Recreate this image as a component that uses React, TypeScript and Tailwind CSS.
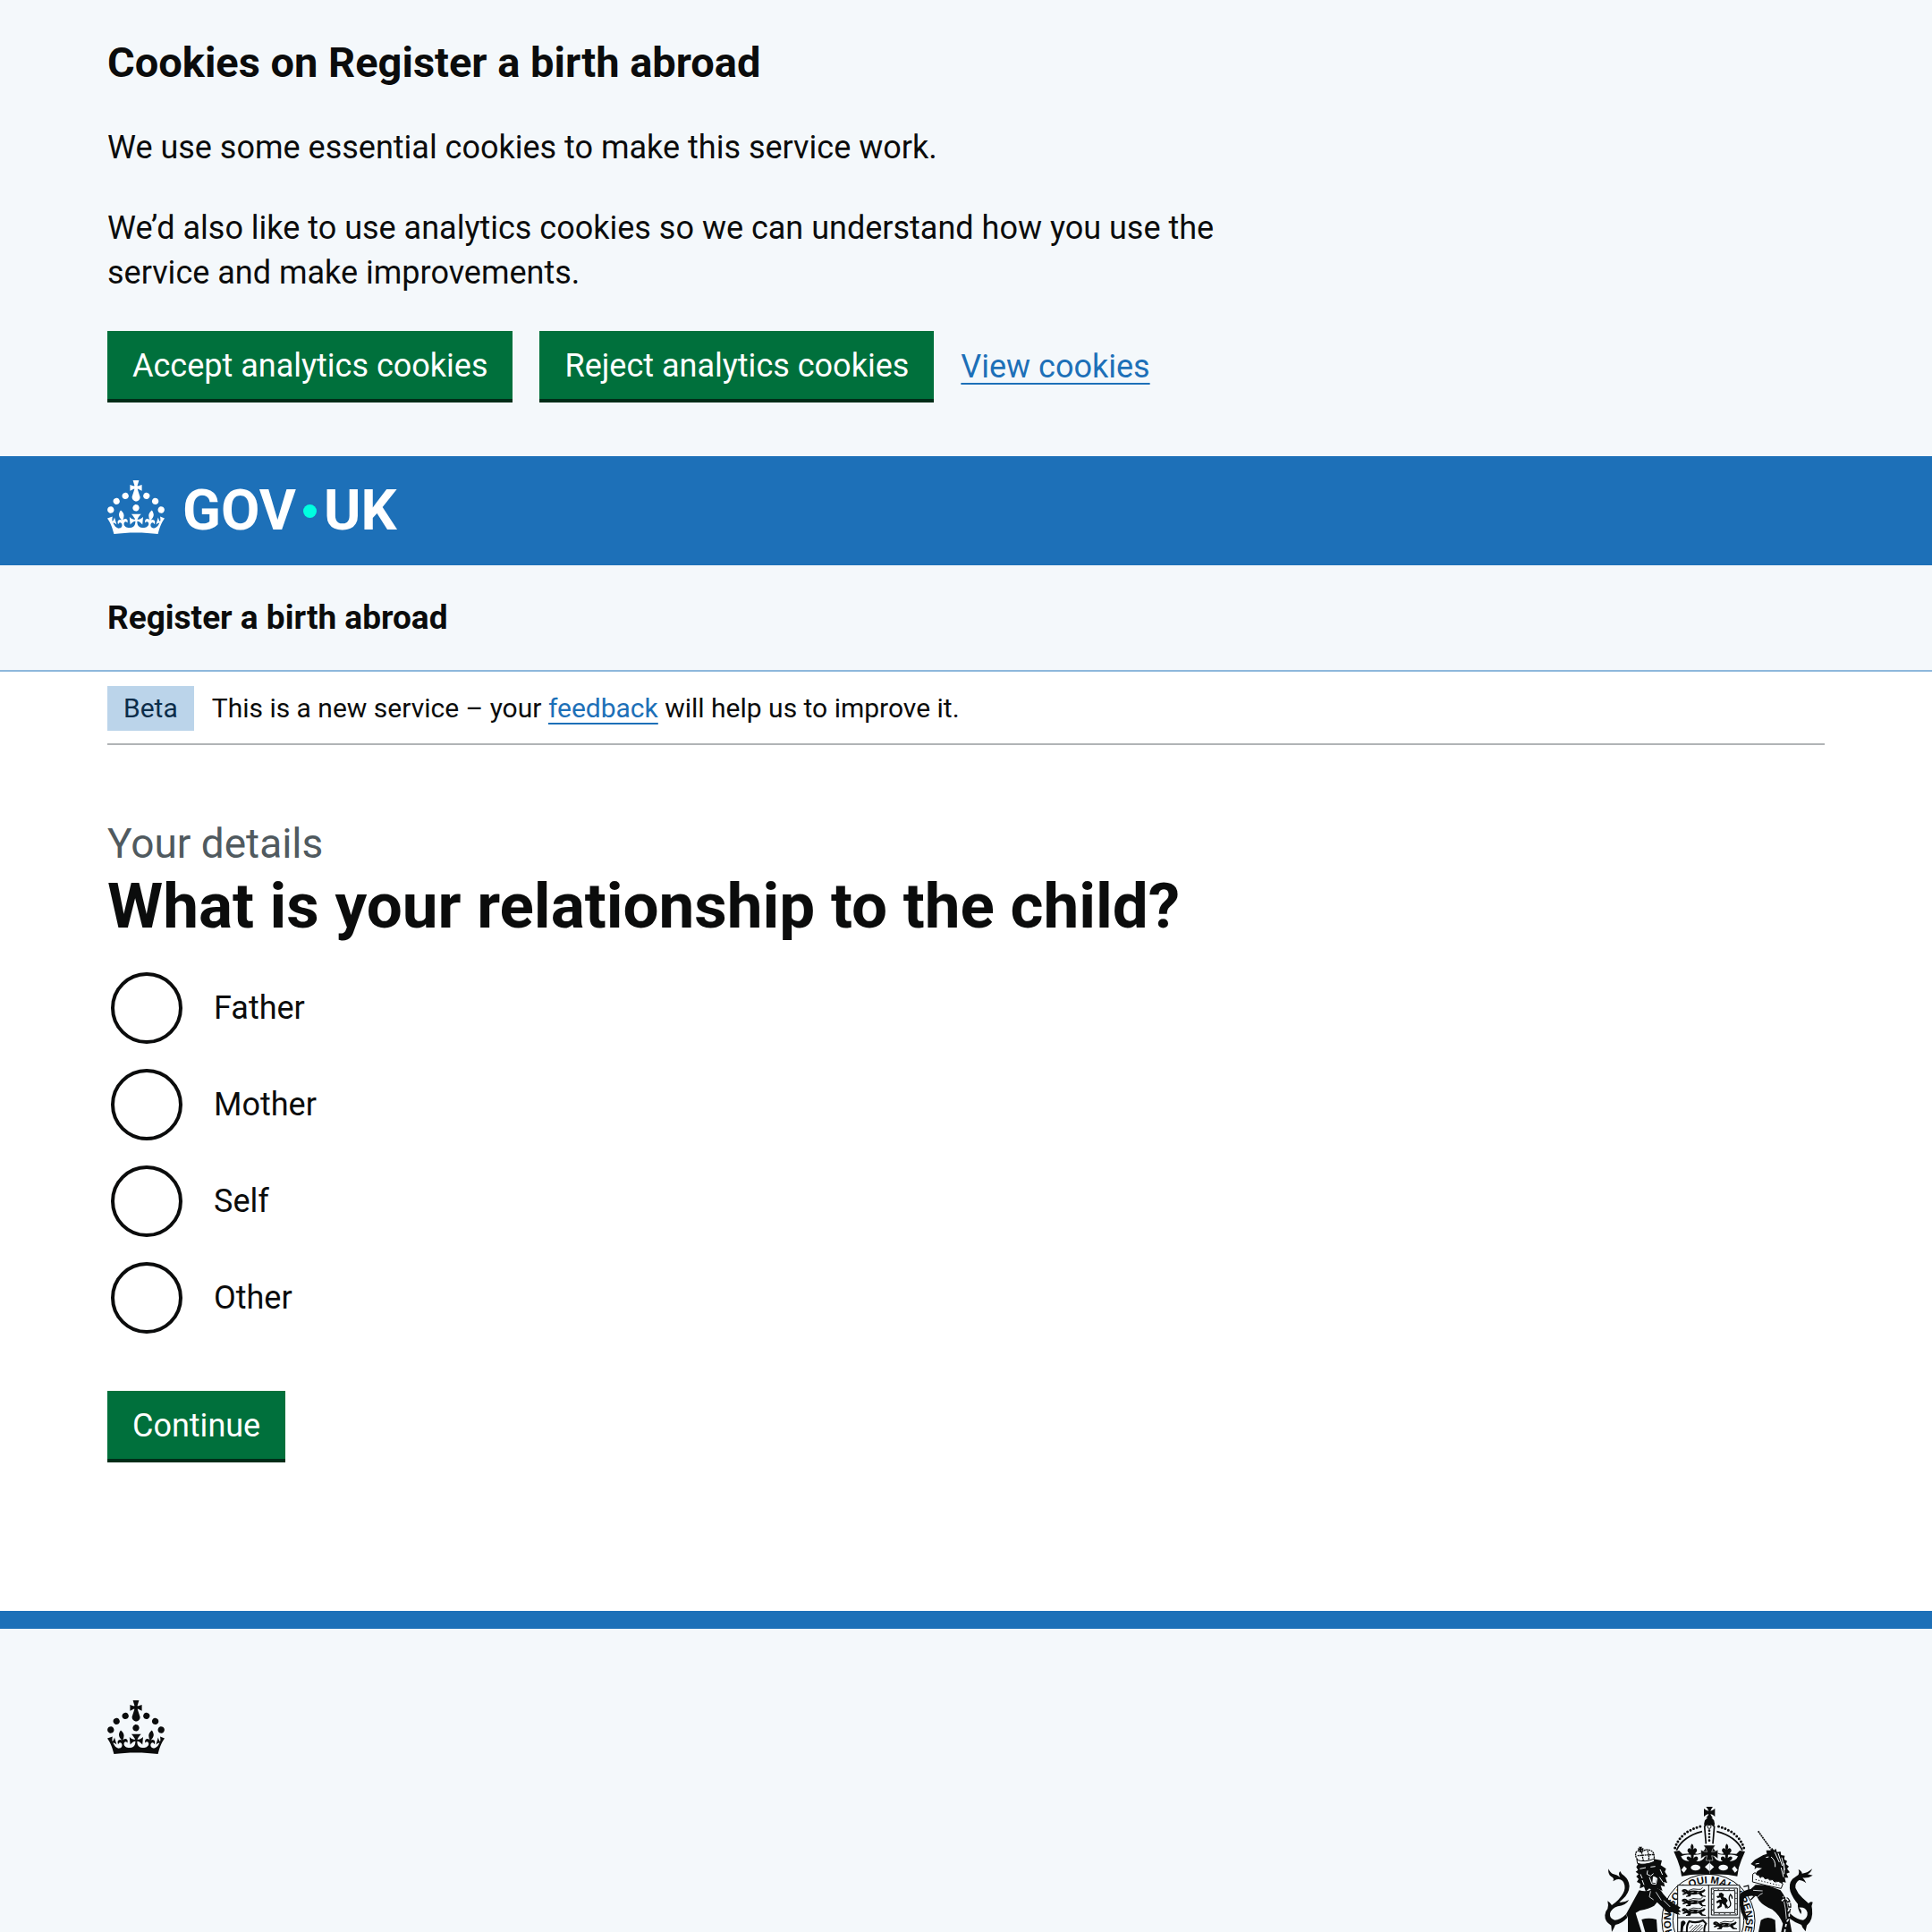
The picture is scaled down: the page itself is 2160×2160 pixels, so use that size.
import type { ReactNode } from "react";

const relationships = ["Father", "Mother", "Self", "Other"];

function Container({ className = "", children }: { className?: string; children: ReactNode }) {
  return <div className={"mx-auto w-full max-w-[1920px] " + className}>{children}</div>;
}

function GreenButton({ children }: { children: ReactNode }) {
  return (
    <button
      type="button"
      className="h-20 cursor-pointer border-b-4 border-[#002d18] bg-[#00703c] px-7 pt-[2px] text-[36px] leading-[38px] text-white"
    >
      {children}
    </button>
  );
}

function TextLink({ children }: { children: ReactNode }) {
  return (
    <a href="#" className="text-[#1d70b8] underline decoration-2 underline-offset-[6px]">
      {children}
    </a>
  );
}

function Crown() {
  return (
    <svg viewBox="0 0 32 30" className="h-[60px] w-16 shrink-0" fill="currentColor" aria-hidden="true">
      <path
        fillRule="evenodd"
        d="M22.6 10.4c-1 .4-2-.1-2.4-1-.4-.9.1-2 1-2.4.9-.4 2 .1 2.4 1s-.1 2-1 2.4m-5.9 6.7c-.9.4-2-.1-2.4-1-.4-.9.1-2 1-2.4.9-.4 2 .1 2.4 1s-.1 2-1 2.4m10.8-3.7c-1 .4-2-.1-2.4-1-.4-.9.1-2 1-2.4.9-.4 2 .1 2.4 1s0 2-1 2.4m3.3 4.8c-1 .4-2-.1-2.4-1-.4-.9.1-2 1-2.4.9-.4 2 .1 2.4 1s-.1 2-1 2.4M17 4.7l2.3 1.2V2.5l-2.3.7-.2-.2.9-3h-3.4l.9 3-.2.2c-.1.1-2.3-.7-2.3-.7v3.4L15 4.7c.1.1.1.2.2.2l-1.3 4c-.1.2-.1.4-.1.6 0 1.1.8 2 1.9 2.2h.7c1-.2 1.9-1.1 1.9-2.1 0-.2 0-.4-.1-.6l-1.3-4c-.1-.2 0-.2.1-.3m-7.6 5.7c.9.4 2-.1 2.4-1 .4-.9-.1-2-1-2.4-.9-.4-2 .1-2.4 1s0 2 1 2.4m-5 3c.9.4 2-.1 2.4-1 .4-.9-.1-2-1-2.4-.9-.4-2 .1-2.4 1s.1 2 1 2.4m-3.2 4.8c.9.4 2-.1 2.4-1 .4-.9-.1-2-1-2.4-.9-.4-2 .1-2.4 1s0 2 1 2.4m14.8 11c4.4 0 8.6.3 12.3.8 1.1-4.5 2.4-7 3.7-8.8l-2.5-.9c.2 1.3.3 1.9 0 2.7-.4-.4-.8-1.1-1.1-2.3l-1.2 4c.7-.5 1.3-.8 2-.9-1.1 2.5-2.6 3.1-3.5 3-1.1-.2-1.7-1.2-1.5-2.1.3-1.2 1.5-1.5 2.1-.1 1.1-2.3-.8-3-2-2.3 1.9-1.9 2.1-3.5.6-5.6-2.1 1.6-2.1 3.2-1.2 5.5-1.2-1.4-3.2-.6-2.5 1.6.9-1.4 2.1-.5 1.9.8-.2 1.1-1.7 2.1-3.5 1.9-2.7-.2-2.9-2.1-2.9-3.6.7-.1 1.9.5 2.9 1.9l.4-4.3c-1.1 1.1-2.1 1.4-3.2 1.4.4-1.2 2.1-3 2.1-3h-5.4s1.7 1.9 2.1 3c-1.1 0-2.1-.2-3.2-1.4l.4 4.3c1-1.4 2.2-2 2.9-1.9-.1 1.5-.2 3.4-2.9 3.6-1.9.2-3.4-.8-3.5-1.9-.2-1.3 1-2.2 1.9-.8.7-2.3-1.2-3-2.5-1.6.9-2.2.9-3.9-1.2-5.5-1.5 2-1.3 3.7.6 5.6-1.2-.7-3.1 0-2 2.3.6-1.4 1.8-1.1 2.1.1.2.9-.3 1.9-1.5 2.1-.9.2-2.4-.5-3.5-3 .6 0 1.2.3 2 .9l-1.2-4c-.3 1.1-.7 1.9-1.1 2.3-.3-.8-.2-1.4 0-2.7l-2.9.9C1.3 23 2.6 25.5 3.7 30c3.7-.5 7.9-.8 12.3-.8"
      />
    </svg>
  );
}

/* Left half of the crest's imperial crown; drawn twice, once mirrored. */
function CrownHalf() {
  return (
    <g>
      <path d="M278 198Q296 143 366 125" fill="none" stroke="currentColor" strokeWidth="9" strokeLinecap="round" strokeDasharray="0 11.6" />
      <path d="M283 206Q304 160 369 143" fill="none" stroke="currentColor" strokeWidth="5" />
      <path d="M377 124L382 184" fill="none" stroke="currentColor" strokeWidth="5" />
      <path d="M274 210L292 207L303 218L326 217Q316 208 322 201Q328 196 333 204Q327 193 335 184Q344 193 338 204Q344 196 350 201Q355 208 345 217Q356 220 368 213L378 203Q381 198 375 190L393 190L393 288Q345 284 300 293Q298 266 286 238Z" />
      <g fill="#f4f8fb">
        <path d="M298 226Q305 244 326 242Q314 236 318 228Q324 223 332 232L331 221Q314 218 298 226Z" />
        <path d="M341 221L340 233Q347 223 354 229Q358 238 349 243Q371 244 380 224L372 216Q358 222 341 221Z" />
        <ellipse cx="347" cy="264" rx="16" ry="10" />
        <path d="M309 259L318 268L308 281L299 272Z" />
        <path d="M393 248L378 262L393 276Z" />
      </g>
    </g>
  );
}

function PassantLion({ x, y }: { x: number; y: number }) {
  return (
    <g transform={`translate(${x} ${y})`}>
      <path d="M0 4Q6-2 14 1L22 7Q38 2 58 7Q72 6 74 0L79 3Q76 12 66 13L70 21L80 23V26L66 25L56 16Q44 20 32 18L28 25L14 26V23L22 20L16 16L4 20L2 16L10 12L1 10Z" />
      <path d="M22 5Q38-4 54 1Q64 4 70-5" fill="none" stroke="currentColor" strokeWidth="2.5" />
      <path d="M10 6l3 2M30 12l10-2M50 12l8-2" fill="none" stroke="#f4f8fb" strokeWidth="1.8" />
    </g>
  );
}

function Crest() {
  return (
    <svg viewBox="0 0 780 480" className="block h-40 w-[260px] shrink-0" fill="currentColor" role="img" aria-label="Royal coat of arms">
      {/* garter */}
      <circle cx="390" cy="442" r="156" fill="#f4f8fb" stroke="currentColor" strokeWidth="3" />
      <circle cx="390" cy="442" r="119" fill="none" stroke="currentColor" strokeWidth="3" />
      <defs>
        <path id="garter-motto" d="M310 540A126 126 0 1 1 470 540" />
      </defs>
      <text className="font-['Liberation_Sans'] text-[34px] font-bold" textAnchor="middle">
        <textPath href="#garter-motto" startOffset="49%">HONI SOIT QUI MAL Y PENSE</textPath>
      </text>

      {/* orb and cross */}
      <path d="M382 60H405Q398 68 397 74Q405 72 412 66V93Q405 86 397 84Q399 92 405 97H382Q389 92 391 84Q382 86 375 93V66Q382 72 391 74Q389 67 382 60Z" />
      <path d="M388 96H400L409 106Q413 116 409 128Q393 112 377 128Q374 116 378 106Z" />
      <circle cx="393" cy="127" r="6" fill="none" stroke="currentColor" strokeWidth="3" />
      <path d="M393 140V184" fill="none" stroke="currentColor" strokeWidth="8" strokeLinecap="round" strokeDasharray="0 11" />
      <CrownHalf />
      <g transform="translate(787 0) scale(-1 1)">
        <CrownHalf />
      </g>
      <path d="M374 189H413Q403 202 401 211Q412 212 422 204V235Q412 224 401 224L405 240H382L386 224Q375 224 365 235V204Q375 212 386 211Q384 202 374 189Z" stroke="#f4f8fb" strokeWidth="1.5" />

      {/* shield */}
      <path d="M287 323H495V480H287Z" fill="#f4f8fb" stroke="currentColor" strokeWidth="3" />
      <path d="M391 323V480M287 432H495" fill="none" stroke="currentColor" strokeWidth="3" />
      <PassantLion x={301} y={336} />
      <PassantLion x={301} y={368} />
      <PassantLion x={301} y={400} />
      <PassantLion x={406} y={445} />
      <path d="M400 333H487V423H400Z" fill="none" stroke="currentColor" strokeWidth="3" />
      <path d="M408 341H479V415H408Z" fill="none" stroke="currentColor" strokeWidth="3" />
      <path d="M404 337H483V419H404Z" fill="none" stroke="currentColor" strokeWidth="4" strokeDasharray="3 15" />
      <path d="M425 350L434 348L442 354L440 363L449 366L455 374L449 384L456 396L447 401L444 391L436 384L434 395L421 402L420 396L428 390L427 380L419 384L416 378L427 371L434 372L430 364L421 366L417 360L426 358Z" />
      <path d="M452 400Q470 394 463 378Q456 366 464 354Q470 360 470 368" fill="none" stroke="currentColor" strokeWidth="4" />
      <path d="M318 480Q316 456 326 444Q350 452 372 441L382 452Q374 464 377 480" fill="none" stroke="currentColor" strokeWidth="6" />
      <path d="M328 480L352 456M336 480L362 454M346 480L370 456M356 480L372 464M326 468L338 456" fill="none" stroke="currentColor" strokeWidth="2.5" />
      <path d="M298 446Q310 436 314 450L306 462L304 480H296Z" />

      {/* lion supporter */}
      <path d="M158 340Q180 346 198 338L216 332Q230 336 238 352L256 372L276 386L297 398L290 404L299 412L288 414L296 422L283 420L262 410L264 422L246 408L232 394L218 380L208 392Q192 402 160 408L146 416L152 436L166 480H120V432L114 420Z" />
      <path d="M166 438Q190 430 216 438L219 480H178Z" />
      <path d="M196 343L192 362L206 372M214 346L232 374M240 374L262 396" fill="none" stroke="#f4f8fb" strokeWidth="2.5" />
      <path d="M148 262L160 244L214 236L234 240L230 256L248 268L244 278L254 294L246 298L252 316L240 312L244 328L230 324L236 342L218 334L206 346L192 334L180 344L174 328L160 334L162 318L150 312L156 302L148 294L156 286L146 278L154 272Z" />
      <path d="M160 268L180 264M196 262L212 260M186 274L184 286L196 292L206 284M192 296L200 318L214 320L218 300L206 294M162 286L168 300M228 270L236 288M226 296L238 314M168 306L174 322" fill="none" stroke="#f4f8fb" strokeWidth="3" />
      <path d="M204 294L216 298L214 316L202 314Z" fill="#f4f8fb" />
      <path d="M150 238Q176 248 210 234L208 244Q176 258 152 250Z" fill="#f4f8fb" stroke="currentColor" strokeWidth="3" />
      <path d="M152 238Q142 222 148 212Q156 204 166 212Q180 200 194 206Q210 210 208 234M166 212L172 242M186 208Q192 222 190 240M152 224L208 220" fill="none" stroke="currentColor" strokeWidth="4" strokeDasharray="6 2" />
      <path d="M156 194H168L165 200L172 198V208L165 205L168 213H158L160 205L154 208V198L160 200Z" />
      <path d="M55 268Q60 282 72 286Q84 288 94 296Q86 284 94 276Q99 288 108 292Q124 306 125 326Q124 350 104 368L91 380Q108 382 124 372Q112 392 86 394Q66 400 60 418Q58 436 76 440Q94 440 114 420L118 432Q100 452 78 456Q74 466 66 480L64 458Q42 446 43 424Q44 410 52 402Q56 392 52 376Q62 382 66 390Q92 372 104 350Q114 332 106 314Q98 300 82 304L70 310Q76 300 64 294Q52 286 55 268Z" />

      {/* unicorn supporter */}
      <path d="M557 142L600 202" fill="none" stroke="currentColor" strokeWidth="5" strokeDasharray="6 2" />
      <path d="M532 252L546 238L574 222L586 218L584 206L598 206L604 198L610 206L616 200L620 212L632 210L634 222L646 224L644 236L654 242L650 252L660 260L654 268L663 280L652 284L658 298L646 298L650 314L640 312L632 326Q588 318 546 288L554 276L570 266L552 264L545 270L546 260Z" />
      <path d="M583 230L592 228M548 252L560 250M600 228Q616 240 614 262M612 212L628 246M624 216L638 258M636 230L646 272M644 250L644 286M634 264L642 296" fill="none" stroke="#f4f8fb" strokeWidth="3" />
      <path d="M539 286Q548 276 552 288Q560 286 564 298Q574 288 580 302Q590 296 596 306Q606 300 612 312Q624 306 640 318L634 334Q580 324 538 312Z" fill="#f4f8fb" stroke="currentColor" strokeWidth="3" />
      <path d="M548 304L628 324" fill="none" stroke="currentColor" strokeWidth="3" strokeDasharray="4 6" />
      <path d="M496 352Q508 340 532 336L548 322Q584 320 612 332L632 340Q652 366 656 398Q662 440 670 480H634L640 452Q628 422 604 404Q574 392 560 374L552 360Q528 356 510 364Q504 384 514 416L524 438L514 440L500 414Q492 380 496 352Z" />
      <path d="M566 440Q590 424 614 440L616 480H558Z" />
      <path d="M508 328L524 324L526 344L514 350L534 352L544 360L532 372" fill="none" stroke="currentColor" strokeWidth="4" />
      <path d="M540 340L572 342M572 350Q560 354 556 362M640 360Q650 400 652 440" fill="none" stroke="#f4f8fb" strokeWidth="2.5" />
      <path d="M636 376Q650 360 658 376Q666 394 658 410Q666 430 654 444Q648 462 646 480" fill="none" stroke="currentColor" strokeWidth="12" strokeDasharray="15 3" />
      <path d="M636 376Q650 360 658 376Q666 394 658 410Q666 430 654 444Q648 462 646 480" fill="none" stroke="#f4f8fb" strokeWidth="5" strokeDasharray="10 8" />
      <path d="M738 268Q734 282 722 286L740 290Q726 300 706 298Q714 306 718 316Q704 306 694 306Q680 316 682 332Q690 352 706 366L726 384Q732 376 740 380Q734 392 738 404Q742 440 720 458L716 478Q704 466 702 456Q682 450 664 436L666 420Q690 440 708 440Q724 434 722 414Q716 396 694 398Q706 408 700 420Q688 402 690 386Q672 364 665 344Q658 318 672 302L692 288Q696 278 692 270Q704 276 704 284Q724 282 738 268Z" />
    </svg>
  );
}

export default function App() {
  return (
    <div className="flex min-h-screen flex-col bg-[#f4f8fb] font-['Roboto',sans-serif] text-[36px] leading-[50px] text-[#0b0c0c]">
      <section aria-label="Cookies on Register a birth abroad" className="pt-10 pb-[60px]">
        <Container className="flex flex-col gap-10">
          <h2 className="text-[47px] leading-[60px] font-bold">Cookies on Register a birth abroad</h2>
          <div className="flex w-2/3 flex-col gap-10">
            <p>We use some essential cookies to make this service work.</p>
            <p>We’d also like to use analytics cookies so we can understand how you use the service and make improvements.</p>
          </div>
          <div className="flex items-center gap-[30px]">
            <GreenButton>Accept analytics cookies</GreenButton>
            <GreenButton>Reject analytics cookies</GreenButton>
            <TextLink>View cookies</TextLink>
          </div>
        </Container>
      </section>

      <header>
        <div className="bg-[#1d70b8] text-white">
          <Container className="flex h-[122px] items-center pb-2">
            <a href="#" aria-label="GOV.UK" className="flex items-center">
              <Crown />
              <span className="flex items-center gap-2 pt-2 pl-5 text-[63px] leading-[62px] font-bold">
                GOV
                <span className="h-[15px] w-[15px] rounded-full bg-[#00ffe0]" />
                UK
              </span>
            </a>
          </Container>
        </div>
        <div className="border-b-2 border-[#8eb8dc]">
          <Container className="flex h-[117px] items-center">
            <a href="#" className="text-[37px] font-bold">
              Register a birth abroad
            </a>
          </Container>
        </div>
      </header>

      <main className="bg-white pb-[166px]">
        <Container>
          <div className="flex items-center gap-5 border-b-2 border-[#b1b4b6] pt-4 pb-[14px] text-[30px] leading-[40px]">
            <strong className="bg-[#bbd4ea] px-[18px] py-[5px] font-normal text-[#0c2d4a]">Beta</strong>
            <span>
              This is a new service – your <TextLink>feedback</TextLink> will help us to improve it.
            </span>
          </div>

          <form className="pt-20" onSubmit={(event) => event.preventDefault()}>
            <fieldset>
              <legend className="pb-[34px]">
                <span className="block text-[46px] leading-[60px] text-[#505a5f]">Your details</span>
                <h1 className="text-[71px] leading-[80px] font-bold">What is your relationship to the child?</h1>
              </legend>
              <div className="flex flex-col gap-7 pl-1">
                {relationships.map((name) => (
                  <label key={name} className="flex w-fit items-center gap-[35px]">
                    <input
                      type="radio"
                      name="relationship"
                      value={name.toLowerCase()}
                      className="h-20 w-20 appearance-none rounded-full border-4 border-[#0b0c0c] bg-white checked:bg-[#0b0c0c] checked:shadow-[inset_0_0_0_16px_white]"
                    />
                    {name}
                  </label>
                ))}
              </div>
            </fieldset>
            <div className="pt-16">
              <GreenButton>Continue</GreenButton>
            </div>
          </form>
        </Container>
      </main>

      <footer className="border-t-[20px] border-[#1d70b8] pt-20">
        <Container className="flex items-start justify-between">
          <Crown />
          <div className="pt-[99px]">
            <Crest />
          </div>
        </Container>
      </footer>
    </div>
  );
}
